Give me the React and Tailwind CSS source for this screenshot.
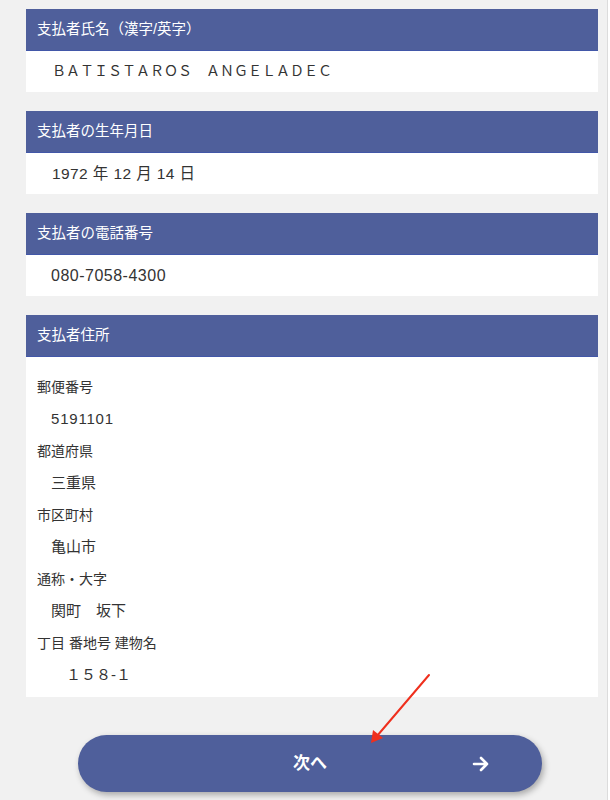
export default function App() {
  const font = { fontFamily: '"Liberation Sans", "Noto Sans CJK JP", sans-serif' };

  const address = [
    ["郵便番号", "5191101", "tracking-[0.8px]"],
    ["都道府県", "三重県", ""],
    ["市区町村", "亀山市", ""],
    ["通称・大字", "関町　坂下", ""],
    ["丁目 番地号 建物名", "　１５８-１", "text-[12.5px]"],
  ];

  return (
    <div style={font} className="relative min-h-screen w-[608px] bg-[#f1f1f1] border-r border-[#dcdcdc] text-[#333]">
      <div className="flex flex-col gap-[19px] pl-[26px] pr-[9px] pt-[9px]">
        <Card title="支払者氏名（漢字/英字）">
          <div className="flex h-[41px] items-center pl-[26px] text-[14px]">ＢＡＴＩＳＴＡＲＯＳ　ＡＮＧＥＬＡＤＥＣ</div>
        </Card>
        <Card title="支払者の生年月日">
          <div className="flex h-[41px] items-center pl-[26px] text-[15.5px] tracking-[0.4px]">1972 年 12 月 14 日</div>
        </Card>
        <Card title="支払者の電話番号">
          <div className="flex h-[41px] items-center pl-[25px] text-[16px] tracking-[0.5px]">080-7058-4300</div>
        </Card>
        <Card title="支払者住所">
          <div className="pt-[14px] pb-[6px] text-[14px]">
            {address.map(([label, value, extra]) => (
              <div key={label}>
                <div className="flex h-[32px] items-center pl-[11px]">{label}</div>
                <div className={"flex h-[32px] items-center pl-[25px] text-[15px] " + extra}>{value}</div>
              </div>
            ))}
          </div>
        </Card>
      </div>

      <div className="pt-[38px] pl-[78px] pb-[20px]">
        <button className="relative flex h-[57px] w-[464px] items-center justify-center rounded-full bg-[#4f5f9b] text-[17px] font-bold text-white shadow-[2px_3px_6px_rgba(0,0,0,0.3)]">
          次へ
          <svg className="absolute right-[52px] top-1/2 -translate-y-1/2" width="18" height="16" viewBox="0 0 18 16" fill="none">
            <path d="M2 8h13M9 2l6 6-6 6" stroke="white" strokeWidth="2.6" strokeLinecap="round" strokeLinejoin="round" />
          </svg>
        </button>
      </div>

      <svg className="pointer-events-none absolute left-0 top-0" width="608" height="800" viewBox="0 0 608 800">
        <line x1="429" y1="675" x2="377" y2="736" stroke="#ef2f1d" strokeWidth="2" strokeLinecap="round" />
        <polygon points="371,743 373,730 383,738" fill="#ef2f1d" />
      </svg>
    </div>
  );
}

function Card({ title, children }) {
  return (
    <div className="bg-white">
      <div className="flex h-[42px] items-center border-b border-[#4257a8] bg-[#4f5f9b] px-[11px] text-[14.5px] text-white">
        {title}
      </div>
      {children}
    </div>
  );
}
